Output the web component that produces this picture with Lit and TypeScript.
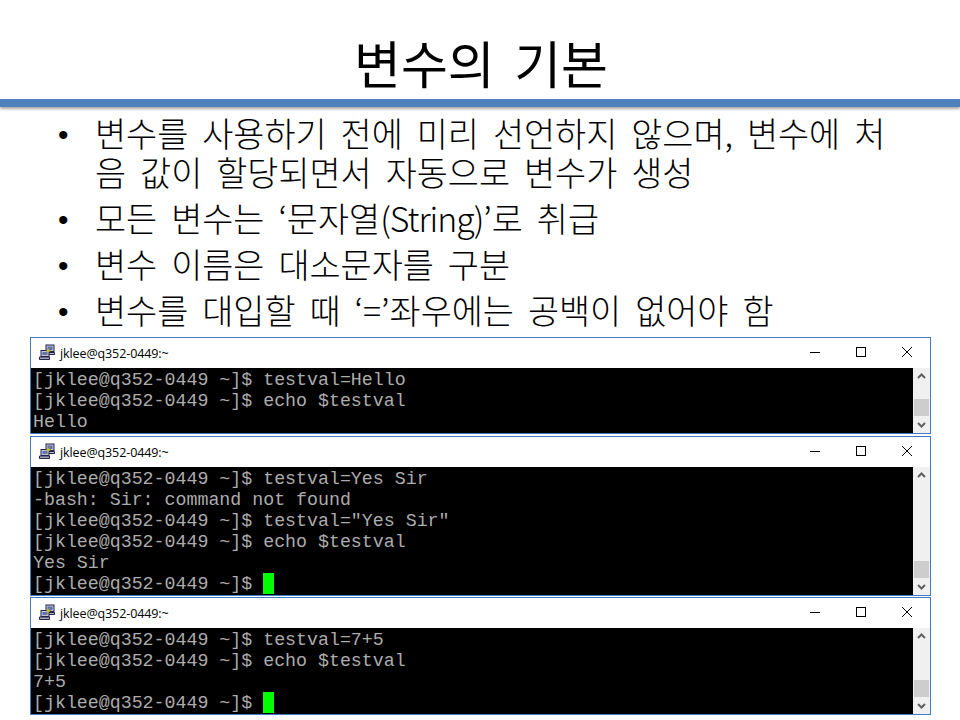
import { LitElement, html, css, svg } from "lit";
import { customElement } from "lit/decorators.js";

const P = "[jklee@q352-0449 ~]$ ";
const windows: { lines: string[]; cursor?: boolean }[] = [
  { lines: [P + "testval=Hello", P + "echo $testval", "Hello"] },
  { lines: [P + "testval=Yes Sir", "-bash: Sir: command not found", P + 'testval="Yes Sir"', P + "echo $testval", "Yes Sir", P], cursor: true },
  { lines: [P + "testval=7+5", P + "echo $testval", "7+5", P], cursor: true },
];

const bullets = [
  html`변수를 사용하기 전에 미리 선언하지 않으며, 변수에 처음 값이 할당되면서 자동으로 변수가 생성`,
  html`모든 변수는 ‘문자열<span class="lat">(String)</span>’로 취급`,
  html`변수 이름은 대소문자를 구분`,
  html`변수를 대입할 때 ‘=’좌우에는 공백이 없어야 함`,
];

const puttyIcon = svg`<svg class="putty" viewBox="0 0 16 16" width="16" height="16">
  <rect x="7" y="1" width="8" height="6.5" fill="#c4c4dc" stroke="#23234a"/>
  <rect x="8.5" y="2.5" width="5" height="3.5" fill="#5a6fc0"/>
  <path d="M6.5 8.5h9v2h-9z" fill="#b8b8c8" stroke="#23234a"/>
  <rect x="2" y="6.5" width="8" height="6" fill="#c4c4dc" stroke="#23234a"/>
  <rect x="3.5" y="8" width="5" height="3" fill="#5a6fc0"/>
  <path d="M0.5 13h10v2.5h-10z" fill="#a8a8b8" stroke="#23234a"/>
  <path d="M12 3 7 7l2.5.3L6 11l6-4.5-2.5-.3z" fill="#f2ee30" stroke="#7a7a10" stroke-width=".4"/>
</svg>`;

@customElement("app-root")
export class AppRoot extends LitElement {
  static styles = css`
    :host { display: block; width: 960px; height: 720px; background: #fff; overflow: hidden; font-family: "Noto Sans CJK KR", "Noto Sans", sans-serif; color: #000; }
    .title { height: 99px; box-sizing: border-box; padding-top: 27px; margin: 0; text-align: center; font-size: 51px; line-height: 70px; font-weight: 400; padding-left: 2px; word-spacing: 8px; }
    .rule { height: 8px; background: #4f81bd; box-shadow: 0 2px 3px rgba(0,0,0,.35); }
    ul { list-style: none; margin: 0; padding: 6px 58px 0 58px; height: 230px; box-sizing: border-box; }
    li { display: flex; font-size: 33.8px; line-height: 39px; margin-bottom: 7px; }
    .dot { flex: 0 0 37px; height: 39px; font-family: "Liberation Sans", sans-serif; font-size: 30px; line-height: 43px; }
    .text { flex: 1; word-spacing: 6.5px; font-weight: 300; }
    .lat { letter-spacing: -1px; }
    .windows { display: flex; flex-direction: column; gap: 2px; margin: 0 29px 0 30px; }
    .windows .win:last-child { margin-top: -1px; }
    .win { border: 1px solid #3f7cc4; background: #fff; }
    .bar { height: 30px; display: flex; align-items: center; padding-left: 8px; font-family: "Open Sans", sans-serif; font-size: 12.5px; color: #000; }
    .putty { margin: -2px 5px 0 0; }
    .name { flex: 1; letter-spacing: -.1px; }
    .ctl { width: 46px; height: 30px; flex: none; display: block; }
    .ctls { display: flex; }
    .body { display: flex; }
    .term { flex: 1; background: #000; color: #acacac; font-family: "Liberation Mono", monospace; font-size: 18.28px; line-height: 21px; padding: 2px 0 0 2px; white-space: pre; }
    .line { height: 21px; }
    .cur { display: inline-block; width: 11px; height: 21px; background: #00ff00; vertical-align: top; margin-top: -1px; }
    .sb { flex: 0 0 17px; background: #f0f0f0; display: flex; flex-direction: column; }
    .arrow { height: 17px; display: block; flex: none; }
    .gap { flex: 1; }
    .thumb { height: 17px; margin: 0 1px; background: #cdcdcd; flex: none; }
  `;

  render() {
    return html`
      <h1 class="title">변수의 기본</h1>
      <div class="rule"></div>
      <ul>
        ${bullets.map((b) => html`<li><span class="dot">•</span><span class="text">${b}</span></li>`)}
      </ul>
      <div class="windows">
        ${windows.map((w) => html`
          <div class="win">
            <div class="bar">
              ${puttyIcon}
              <span class="name">jklee@q352-0449:~</span>
              <div class="ctls">
                <svg class="ctl" viewBox="0 0 46 30"><path d="M18 14.5h10" stroke="#000" fill="none"/></svg>
                <svg class="ctl" viewBox="0 0 46 30"><rect x="18.5" y="9.5" width="9" height="9" stroke="#000" fill="none"/></svg>
                <svg class="ctl" viewBox="0 0 46 30"><path d="M18 9l10 10M28 9 18 19" stroke="#000" fill="none"/></svg>
              </div>
            </div>
            <div class="body">
              <div class="term">${w.lines.map((l, i) => html`<div class="line">${l}${w.cursor && i === w.lines.length - 1 ? html`<span class="cur"></span>` : ""}</div>`)}</div>
              <div class="sb">
                <svg class="arrow" viewBox="0 0 17 17"><path d="M5 10l3.5-3.5L12 10" stroke="#606060" stroke-width="2" fill="none"/></svg>
                <div class="gap"></div>
                <div class="thumb"></div>
                <svg class="arrow" viewBox="0 0 17 17"><path d="M5 7l3.5 3.5L12 7" stroke="#606060" stroke-width="2" fill="none"/></svg>
              </div>
            </div>
          </div>`)}
      </div>
    `;
  }
}
